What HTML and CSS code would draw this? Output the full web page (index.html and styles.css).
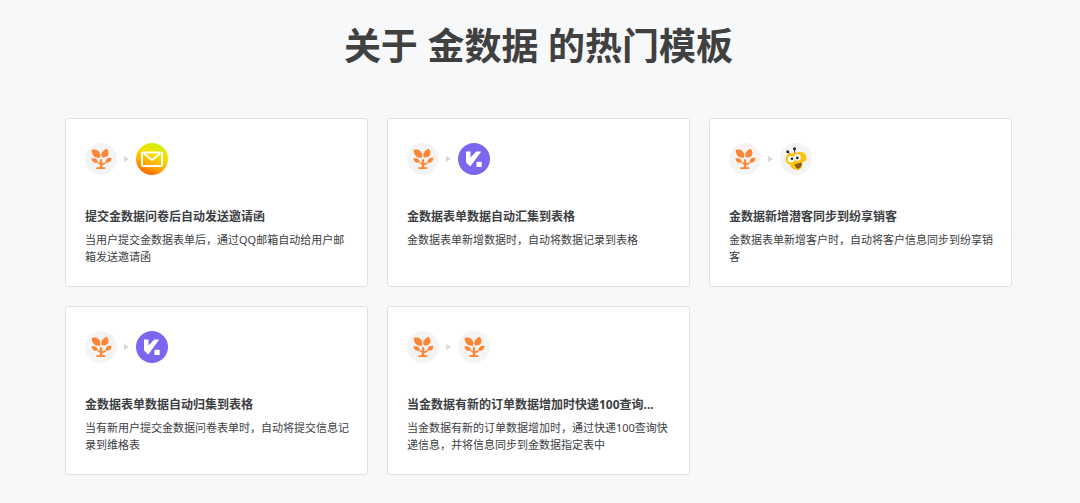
FILE: index.html
```html
<!DOCTYPE html>
<html lang="zh-CN">
<head>
    <meta charset="UTF-8">
    <title>金数据 热门模板</title>

    <link rel="stylesheet" href="styles.css">
</head>

<body>

<!-- app logos, reused by the cards -->
<svg class="sprite" aria-hidden="true">
    <defs>
        <linearGradient id="mailBg" x1="0.7" y1="0" x2="0.3" y2="1">
            <stop offset="0" stop-color="#c8ef05"/>
            <stop offset="0.35" stop-color="#f5e000"/>
            <stop offset="0.65" stop-color="#ffae00"/>
            <stop offset="1" stop-color="#ff6000"/>
        </linearGradient>
    </defs>

    <symbol id="tree" viewBox="0 0 32 32">
        <circle cx="16" cy="16" r="16" fill="#f4f4f4"/>
        <g fill="#ff8534">
            <path d="M6.800 6.800c2.500-.6 5.500-.2 7 1.700 1.500 1.900 1.700 4 1.300 6.200-2.400.3-4.900-.1-6.500-1.900C7.100 11 6.700 8.800 6.800 6.800z"/>
            <path d="M21.800 5.800c1.700 2.300 2.400 5 .8 7-1.400 1.700-3.400 1.900-5.600 1.500-1.100-1.900-.9-4.200.7-5.900 1.200-1.300 2.600-2 4.100-2.600z"/>
            <path d="M6.300 15.600c3.500-1 6.300.2 6.500 3.300-2.900 1.900-5.600.7-6.500-3.300z"/>
            <path d="M26.400 14.800c.1 3.900-2.300 5.800-5.900 4.600-.2-3.100 1.900-5.100 5.900-4.600z"/>
            <path d="M11.900 19.200c1.100 0 2 .2 2.900.6l.1-3.500h2.200l.1 3.900c1.100-.2 2-.5 3.100-1l.7 1.100c-1.100 1.100-2.400 1.700-3.800 2l.1 1.900h3v1.800h-9v-1.800h3.400l.1-2.800c-1-.3-2-.7-2.900-2.200z"/>
        </g>
    </symbol>

    <symbol id="mail" viewBox="0 0 32 32">
        <circle cx="16" cy="16" r="16" fill="url(#mailBg)"/>
        <rect x="6" y="9.500" width="20" height="13.500" rx="1" fill="none" stroke="#fff" stroke-width="2"/>
        <path d="M8 10.500l8 6.500 8-6.500" fill="none" stroke="#fff" stroke-width="2"/>
    </symbol>

    <symbol id="vika" viewBox="0 0 32 32">
        <circle cx="16" cy="16" r="16" fill="#7b67ee"/>
        <path d="M8 8.500h4.500v6l5.800-6h5L12.300 23.500 8 19.500z" fill="#fff"/>
        <rect x="18.500" y="18.800" width="5.200" height="5.200" fill="#fff"/>
    </symbol>

    <symbol id="bee" viewBox="0 0 32 32">
        <circle cx="16" cy="16" r="16" fill="#f4f4f4"/>
        <path d="M10 11L7.800 8.500M14.800 10l-.4-4" stroke="#333" stroke-width="0.9"/>
        <circle cx="7.800" cy="8.800" r="1.500" fill="#222"/>
        <circle cx="14.500" cy="5.800" r="1.500" fill="#222"/>
        <path d="M6.500 12.500c2-2.700 6-2.500 10.500-3 4.500-1.700 9.500.7 9.500 5 0 2.800-1.700 4.800-4.300 4.700.6 5-1.700 7.800-5.200 7.800-3.600-.2-6.300-2.500-7-5.200-4.300-1.200-5.300-5.300-3.500-9.300z" fill="#fdc211"/>
        <path d="M14.700 21.300l6.800-1.700c1 2.700-.7 6-3.700 6.100-1.800-.8-3-2.300-3.100-4.400z" fill="#8b610b"/>
        <circle cx="11" cy="16.200" r="3.300" fill="#fff"/>
        <circle cx="17.500" cy="14.600" r="3.300" fill="#fff"/>
        <circle cx="12" cy="15.800" r="1.300" fill="#222"/>
        <circle cx="17.300" cy="14.900" r="1.300" fill="#222"/>
    </symbol>
</svg>

<main class="templates">

    <h1 class="templates-title">关于 金数据 的热门模板</h1>

    <div class="template-list">

        <article class="card">
            <div class="card-apps">
                <svg class="app-icon"><use href="#tree"/></svg>
                <span class="arrow"></span>
                <svg class="app-icon"><use href="#mail"/></svg>
            </div>
            <h2 class="card-title">提交金数据问卷后自动发送邀请函</h2>
            <p class="card-text">当用户提交金数据表单后，通过QQ邮箱自动给用户邮箱发送邀请函</p>
        </article>

        <article class="card">
            <div class="card-apps">
                <svg class="app-icon"><use href="#tree"/></svg>
                <span class="arrow"></span>
                <svg class="app-icon"><use href="#vika"/></svg>
            </div>
            <h2 class="card-title">金数据表单数据自动汇集到表格</h2>
            <p class="card-text">金数据表单新增数据时，自动将数据记录到表格</p>
        </article>

        <article class="card">
            <div class="card-apps">
                <svg class="app-icon"><use href="#tree"/></svg>
                <span class="arrow"></span>
                <svg class="app-icon"><use href="#bee"/></svg>
            </div>
            <h2 class="card-title">金数据新增潜客同步到纷享销客</h2>
            <p class="card-text">金数据表单新增客户时，自动将客户信息同步到纷享销客</p>
        </article>

        <article class="card">
            <div class="card-apps">
                <svg class="app-icon"><use href="#tree"/></svg>
                <span class="arrow"></span>
                <svg class="app-icon"><use href="#vika"/></svg>
            </div>
            <h2 class="card-title">金数据表单数据自动归集到表格</h2>
            <p class="card-text">当有新用户提交金数据问卷表单时，自动将提交信息记录到维格表</p>
        </article>

        <article class="card">
            <div class="card-apps">
                <svg class="app-icon"><use href="#tree"/></svg>
                <span class="arrow"></span>
                <svg class="app-icon"><use href="#tree"/></svg>
            </div>
            <h2 class="card-title">当金数据有新的订单数据增加时快递100查询...</h2>
            <p class="card-text">当金数据有新的订单数据增加时，通过快递100查询快递信息，并将信息同步到金数据指定表中</p>
        </article>

    </div>

</main>

</body>
</html>
```
FILE: styles.css
```css
* {
    box-sizing: border-box;
}

body {
    margin: 0;
    background: #f7f8fa;
    color: #3c4043;
    font-family: "Noto Sans", "Noto Sans CJK SC", sans-serif;
}

.sprite {
    display: block;
    width: 0;
    height: 0;
}

.templates {
    padding: 18px 68px 27px 65px;
}

.templates-title {
    margin: 0 0 44px;
    color: #404040;
    font-size: 37px;
    line-height: 56px;
    font-weight: bold;
    text-align: center;
}

.template-list {
    display: grid;
    grid-template-columns: repeat(3, 1fr);
    gap: 19px;
}

.card {
    padding: 24px 18px 21px 19px;
    border: 1px solid #dfe1e3;
    border-radius: 3px;
    background: #fff;
}

.card-apps {
    display: flex;
    align-items: center;
    gap: 7px;
    margin-bottom: 32px;
}

.app-icon {
    width: 32px;
    height: 32px;
}

.arrow {
    border-top: 3px solid transparent;
    border-bottom: 3px solid transparent;
    border-left: 5px solid #d6d8dc;
}

.card-title {
    margin: 0 0 4px;
    font-size: 12px;
    line-height: 20px;
    font-weight: bold;
    white-space: nowrap;
    overflow: hidden;
    text-overflow: ellipsis;
}

.card-text {
    margin: 0;
    font-size: 11px;
    line-height: 17px;
}
```
